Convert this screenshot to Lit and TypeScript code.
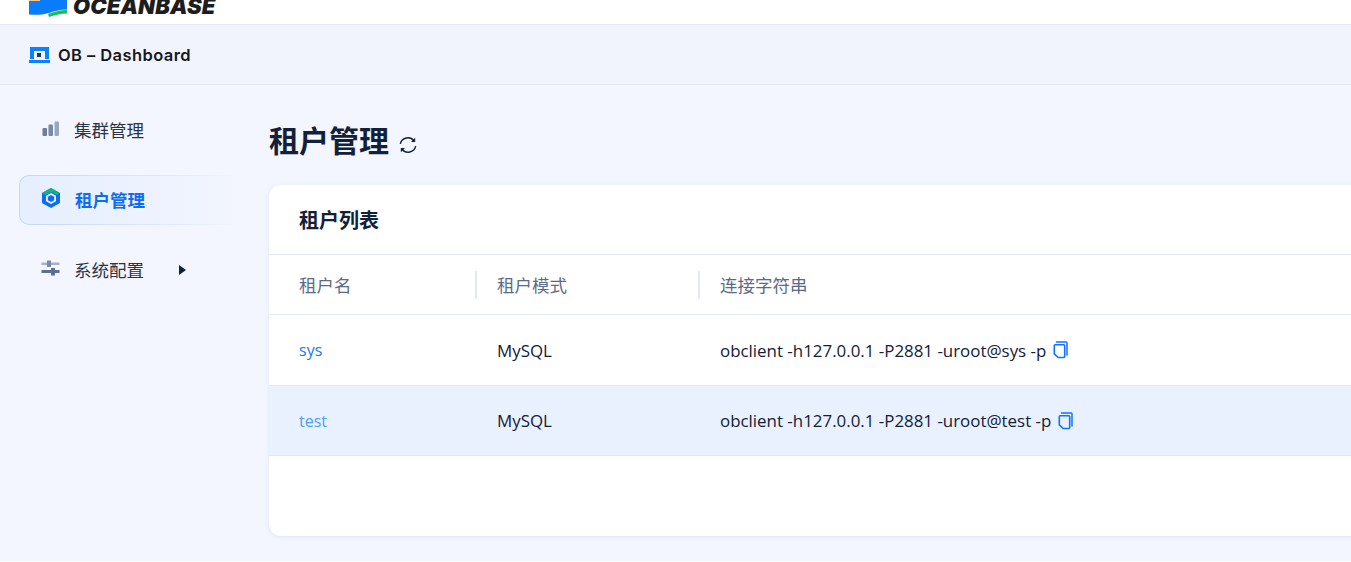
import { LitElement, html, css } from "lit";
import { customElement } from "lit/decorators.js";

const copyIcon = html`<svg class="copy" width="16" height="18" viewBox="0 0 16 18" fill="none">
  <path d="M3.500 1h9.500a1 1 0 0 1 1 1v12" stroke="#0f73ff" stroke-width="1.500" fill="none" stroke-linecap="round"/>
  <path d="M2.200 3.700h8.600a.9.9 0 0 1 .9.9v11a.9.9 0 0 1-.9.9H5.200L1.300 12.800V4.600a.9.9 0 0 1 .9-.9z" stroke="#0f73ff" stroke-width="1.600" fill="none"/>
</svg>`;

@customElement("app-root")
export class AppRoot extends LitElement {
  static styles = css`
    :host { display: block; width: 1351px; height: 562px; overflow: hidden; position: relative;
      font-family: "Open Sans", "Noto Sans CJK SC", sans-serif; background: #f3f6fe; color: #132039; }
    .logo-bar { height: 24px; background: #fff; border-bottom: 1px solid #e3e8f3; display: flex; align-items: flex-start; padding-left: 29px; overflow: hidden; }
    .logo-bar svg { display: block; flex: none; }
    .logo-text { font-family: "Inter", sans-serif; font-weight: 900; font-style: italic; font-size: 22px; line-height: 22px; letter-spacing: 0.1px; color: #1d1d1f; margin-left: 6px; margin-top: -5px; flex: none; }
    .sub-bar { height: 59px; border-bottom: 1px solid #e3e8f3; display: flex; align-items: center; padding-left: 29px; gap: 8px; background: #f1f4fd; }
    .sub-title { font-family: "Inter", sans-serif; font-size: 16.5px; font-weight: 600; letter-spacing: 0.42px; color: #16181d; padding-top: 1px; }
    .body { display: flex; }
    .side { width: 269px; flex: none; padding: 21px 0 0 19px; box-sizing: border-box; display: flex; flex-direction: column; gap: 20px; }
    .item { display: flex; align-items: center; width: 220px; height: 50px; box-sizing: border-box; padding-left: 23px; color: #2b3445; }
    .item .label { margin-left: 14px; margin-top: -2px; font-size: 17.5px; line-height: 24px; }
    .item.active { color: #0d6cf2; font-weight: 700; border: 1px solid transparent; border-right: none; border-radius: 10px 0 0 10px; padding-left: 22px; margin-top: -1px; margin-bottom: 1px;
      background: linear-gradient(90deg, #e6effe 0%, #edf2fe 60%, #f3f6fe 100%) padding-box, linear-gradient(90deg, #c2d7fb 0%, #e0e9fc 70%, #f3f6fe 100%) border-box; }
    .item.active .label { margin-left: 15px; margin-top: 0; }
    .item.active svg { margin-top: -4px; }
    .item svg { flex: none; }
    .item svg.bars { margin-top: -5px; }
    .item svg.cfg { margin-left: -1px; margin-top: -6px; }
    .arrow { margin-left: 35px; width: 0; height: 0; border-left: 7px solid #132039; border-top: 5.5px solid transparent; border-bottom: 5.5px solid transparent; margin-top: -2px; }
    .main { flex: none; width: 1200px; display: flex; flex-direction: column; }
    .h1 { height: 100px; display: flex; align-items: center; gap: 10px; padding-top: 12px; box-sizing: border-box; }
    .h1 b { font-size: 30px; font-weight: 700; color: #132039; line-height: 40px; }
    .h1 svg { margin-top: 7px; }
    .card { background: #fff; border-radius: 12px; box-shadow: 0 1px 4px rgba(60,80,130,0.1); height: 351px; }
    .card-title { height: 69px; border-bottom: 1px solid #e3e8f3; display: flex; align-items: center; padding-left: 30px; font-size: 20px; font-weight: 700; color: #132039; }
    .row { display: grid; grid-template-columns: 207px 223px 1fr; border-bottom: 1px solid #e3e8f3; align-items: center; font-size: 16.9px; color: #132039; }
    .row > div { padding-left: 30px; display: flex; align-items: center; white-space: nowrap; }
    .row > div + div { padding-left: 21px; }
    .head { height: 59px; color: #5c6b8a; font-size: 17.5px; }
    .head > div { height: 28px; }
    .row.head > div + div { border-left: 2px solid #e3e8f3; margin-left: -1px; padding-left: 20px; }
    .row.data { height: 70px; }
    .row.data.hl { height: 69px; background: #e9f1fe; }
    a { color: #1677ff; text-decoration: none; font-size: 16px; }
    a.light { color: #4ba0f8; }
    .copy { margin-left: 7px; }
    .bottom { position: absolute; left: 0; right: 0; bottom: 0; height: 1px; background: #fff; }
  `;

  render() {
    return html`
      <div class="logo-bar">
        <svg width="38" height="18" viewBox="0 0 38 18">
          <path d="M0 0h38v9.500c-6 0-12 1.500-18 3.500-7 2-14 2-20 1.500z" fill="#0a7cff"/>
          <rect x="0" y="0" width="11" height="1" fill="#ffc48a"/>
          <path d="M19 14c6-2 12-4 19-4v3.500c-6 0-11 1.500-18 3.500z" fill="#14c05a"/>
        </svg>
        <span class="logo-text">OCEANBASE</span>
      </div>
      <div class="sub-bar">
        <svg width="21" height="16" viewBox="0 0 21 16">
          <path d="M1 0h19v12h-4V4H5v8H1z" fill="#0a82ff"/>
          <rect x="0" y="13" width="21" height="3" fill="#0a82ff"/>
          <rect x="8" y="6" width="4" height="4" fill="#16396e"/>
        </svg>
        <span class="sub-title">OB – Dashboard</span>
      </div>
      <div class="body">
        <nav class="side">
          <div class="item">
            <svg class="bars" width="18" height="16" viewBox="0 0 18 16">
              <rect x="0.500" y="7" width="4.500" height="8" rx="1" fill="#6f7d9c"/>
              <rect x="6.500" y="3.500" width="4.500" height="11.500" rx="1" fill="#7a88a6"/>
              <rect x="12.500" y="0.500" width="4.500" height="14.500" rx="1" fill="#9aa6bf"/>
            </svg>
            <span class="label">集群管理</span>
          </div>
          <div class="item active">
            <svg width="18" height="20" viewBox="0 0 18 20">
              <path d="M9 0l9 5v10l-9 5-9-5V5z" fill="#0d6cf2"/>
              <path d="M9 0l9 5-3.500 2L9 4 3.500 7 0 5z" fill="#14b47a"/>
              <path d="M9 5l5 2.800v5.400l-5 2.800-5-2.800V7.800z" fill="#e9f1fe"/>
              <path d="M9 7l3.200 1.800v3.400L9 14l-3.200-1.800V8.800z" fill="#0d6cf2"/>
            </svg>
            <span class="label">租户管理</span>
          </div>
          <div class="item">
            <svg class="cfg" width="19" height="16" viewBox="0 0 19 16">
              <rect x="0.500" y="2.500" width="18" height="2.500" fill="#a6b0c6"/>
              <rect x="6" y="0.500" width="4" height="6.500" fill="#7d8aa6"/>
              <rect x="0.500" y="10" width="18" height="3" fill="#5f6f90"/>
              <rect x="10" y="8" width="4" height="7.500" fill="#5f6f90"/>
            </svg>
            <span class="label">系统配置</span>
            <span class="arrow"></span>
          </div>
        </nav>
        <main class="main">
          <div class="h1">
            <b>租户管理</b>
            <svg width="18" height="18" viewBox="0 0 18 18" fill="none" stroke="#132039" stroke-width="1.400">
              <path d="M1.300 7.800a7.800 7.800 0 0 1 13.700-3"/>
              <path d="M16.700 10.200a7.800 7.800 0 0 1-13.700 3"/>
              <path d="M16.200 1.800v4.200h-4.200z" fill="#132039" stroke="none"/>
              <path d="M1.800 16.200v-4.200h4.200z" fill="#132039" stroke="none"/>
            </svg>
          </div>
          <section class="card">
            <div class="card-title">租户列表</div>
            <div class="row head"><div>租户名</div><div>租户模式</div><div>连接字符串</div></div>
            <div class="row data">
              <div><a href="#">sys</a></div><div>MySQL</div>
              <div>obclient -h127.0.0.1 -P2881 -uroot@sys -p${copyIcon}</div>
            </div>
            <div class="row data hl">
              <div><a class="light" href="#">test</a></div><div>MySQL</div>
              <div>obclient -h127.0.0.1 -P2881 -uroot@test -p${copyIcon}</div>
            </div>
          </section>
        </main>
      </div>
      <div class="bottom"></div>
    `;
  }
}
